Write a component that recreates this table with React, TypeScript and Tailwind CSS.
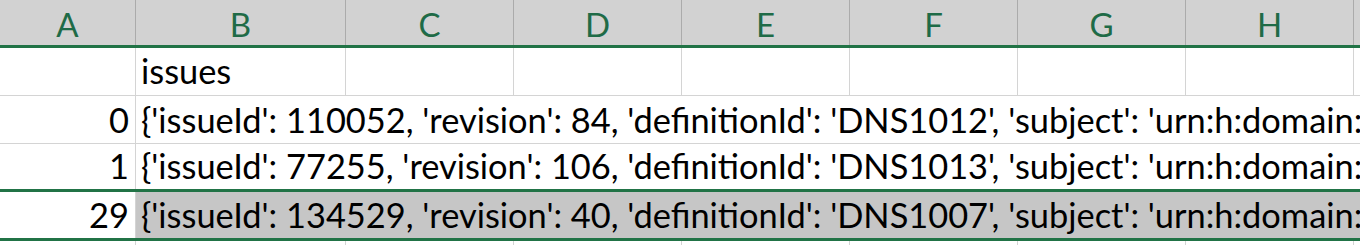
import React from "react";

const columns = [
  { name: "A", width: "w-[136px]" },
  { name: "B", width: "w-[210px]" },
  { name: "C", width: "w-[168px]" },
  { name: "D", width: "w-[168px]" },
  { name: "E", width: "w-[168px]" },
  { name: "F", width: "w-[168px]" },
  { name: "G", width: "w-[168px]" },
  { name: "H", width: "w-[168px]" },
  { name: "", width: "w-[168px]" },
];

const rows = [
  {
    id: "0",
    text: "{'issueId': 110052, 'revision': 84, 'definitionId': 'DNS1012', 'subject': 'urn:h:domain:",
  },
  {
    id: "1",
    text: "{'issueId': 77255, 'revision': 106, 'definitionId': 'DNS1013', 'subject': 'urn:h:domain:",
  },
];

const DataRow: React.FC<{ id: string; text: string; height: string; selected?: boolean }> = ({
  id,
  text,
  height,
  selected,
}) => (
  <div className={`flex ${height}`}>
    <div className="w-[136px] shrink-0 border-r border-[#d4d4d4] flex items-end justify-end pr-[6px] pb-[6px] bg-white">
      {id}
    </div>
    <div
      className={`flex-1 overflow-hidden whitespace-nowrap flex items-end pl-[5px] pb-[6px] ${
        selected ? "bg-[#c6c6c6]" : "bg-white"
      }`}
    >
      {text}
    </div>
  </div>
);

export default function App() {
  return (
    <div
      className="w-[1360px] h-[245px] overflow-hidden bg-white text-black text-[34.4px] leading-none"
      style={{ fontFamily: "Lato, 'Open Sans', sans-serif" }}
    >
      {/* Column headers */}
      <div className="flex h-[45px] bg-[#d2d2d2]">
        {columns.map((c, i) => (
          <div
            key={i}
            className={`${c.width} shrink-0 border-r border-[#ababab] flex items-center justify-center pt-[4px] text-[33px] text-[#1f6b47]`}
          >
            {c.name}
          </div>
        ))}
      </div>
      <div className="h-[3px] bg-[#217346]" />

      {/* Row 1 */}
      <div className="flex h-[48px] border-b border-[#d4d4d4]">
        {columns.map((c, i) => (
          <div
            key={i}
            className={`${c.width} shrink-0 border-r border-[#d4d4d4] flex items-end pl-[5px] pb-[7px]`}
          >
            {c.name === "B" ? "issues" : ""}
          </div>
        ))}
      </div>

      <div className="border-b border-[#d4d4d4]">
        <DataRow id={rows[0].id} text={rows[0].text} height="h-[47px]" />
      </div>
      <DataRow id={rows[1].id} text={rows[1].text} height="h-[45px]" />
      <div className="h-[3px] bg-[#217346]" />
      <DataRow
        id="29"
        text="{'issueId': 134529, 'revision': 40, 'definitionId': 'DNS1007', 'subject': 'urn:h:domain:"
        height="h-[46px]"
        selected
      />
      <div className="h-[3px] bg-[#217346]" />

      <div className="flex h-[10px]">
        {columns.map((c, i) => (
          <div key={i} className={`${c.width} shrink-0 border-r border-[#d4d4d4]`} />
        ))}
      </div>
    </div>
  );
}
